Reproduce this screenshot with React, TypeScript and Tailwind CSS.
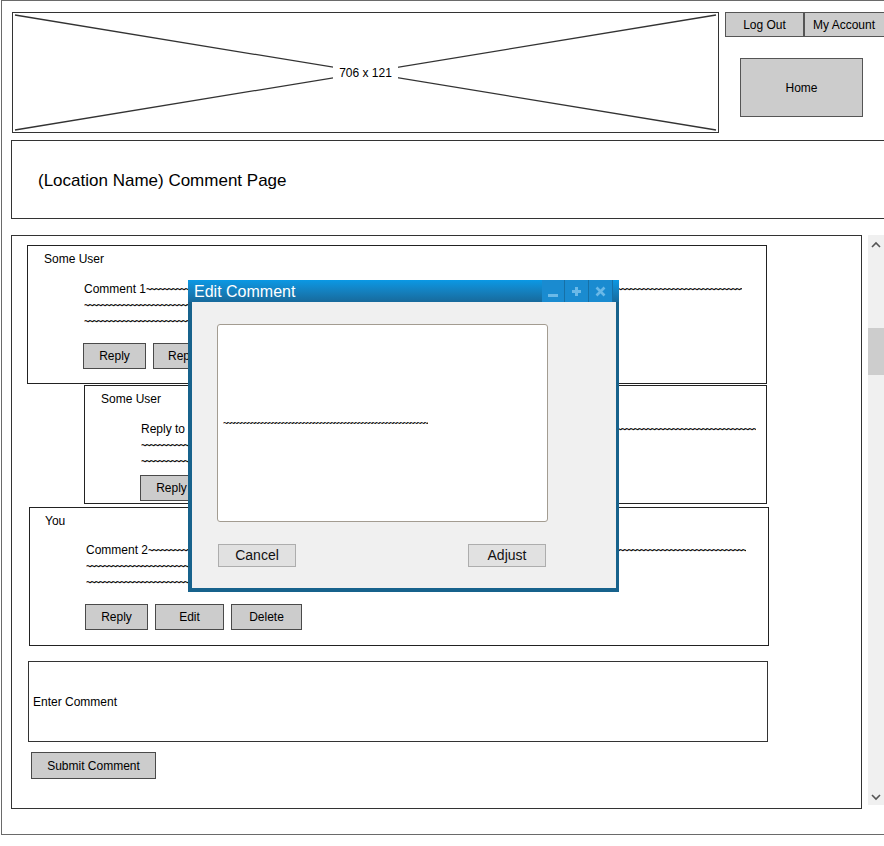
import React from 'react';

const sketchFont = { fontFamily: '"Liberation Sans", Arial, sans-serif' };

const Btn = ({ label, w, h = 'h-[26px]' }: { label: string; w: string; h?: string }) => (
  <div
    className={`${w} ${h} flex items-center justify-center bg-[#cccccc] border-[1.5px] border-[#4a4a4a] text-[12px] text-black`}
  >
    {label}
  </div>
);

const Tildes = ({ w, lead }: { w: string; lead?: string }) => (
  <div className={`${w} h-[16px] leading-[16px] overflow-hidden whitespace-nowrap text-[12px]`}>
    {lead && <span>{lead}</span>}
    <span className="text-[10px] tracking-[-1.6px] text-[#111] font-bold">{'~'.repeat(200)}</span>
  </div>
);

const App = () => {
  return (
    <div className="w-[884px] h-[846px] bg-white overflow-hidden relative" style={sketchFont}>
      {/* outer frame */}
      <div className="ml-[1px] w-[900px] h-[835px] border border-[#6a6a6a]">
        {/* header */}
        <div className="flex pt-[11px] pl-[10px]">
          <div className="w-[707px] h-[121px] border border-[#333] relative flex items-center justify-center">
            <svg className="absolute inset-0" width="705" height="119" viewBox="0 0 705 119">
              <line x1="2" y1="2" x2="703" y2="117" stroke="#333" strokeWidth="1.3" />
              <line x1="2" y1="117" x2="703" y2="2" stroke="#333" strokeWidth="1.3" />
            </svg>
            <span className="relative bg-white px-[6px] text-[12px] leading-[16px]">706 x 121</span>
          </div>
          <div className="ml-[6px] flex flex-col">
            <div className="flex">
              <div className="w-[79px] h-[25px] flex items-center justify-center bg-[#cccccc] border border-[#555] text-[12px]">
                Log Out
              </div>
              <div className="w-[85px] h-[25px] flex items-center pl-[8px] bg-[#cccccc] border border-[#555] text-[12px]">
                My Account
              </div>
            </div>
            <div className="ml-[15px] mt-[21px] w-[123px] h-[59px] flex items-center justify-center bg-[#cccccc] border-[1.5px] border-[#555] text-[12px]">
              Home
            </div>
          </div>
        </div>

        {/* title */}
        <div className="ml-[9px] mt-[7px] w-[900px] h-[79px] border border-[#333] flex items-center pl-[26px] pt-[2px] text-[17px]">
          (Location Name) Comment Page
        </div>

        {/* main */}
        <div className="flex mt-[16px]">
          <div className="ml-[9px] w-[851px] h-[574px] border border-[#333] pt-[9px]">
            {/* comment 1 */}
            <div className="ml-[15px] w-[740px] h-[139px] border border-[#222] pt-[5px]">
              <div className="pl-[16px] text-[12px] leading-[16px]">Some User</div>
              <div className="pl-[56px] mt-[14px]">
                <Tildes w="w-[658px]" lead="Comment 1" />
                <Tildes w="w-[420px]" />
                <Tildes w="w-[420px]" />
                <div className="flex gap-[7px] mt-[14px] -ml-[1px]">
                  <Btn label="Reply" w="w-[63px]" />
                  <Btn label="Report" w="w-[66px]" />
                </div>
              </div>
            </div>

            {/* reply */}
            <div className="ml-[72px] mt-[1px] w-[683px] h-[119px] border border-[#222] pt-[5px]">
              <div className="pl-[16px] text-[12px] leading-[16px]">Some User</div>
              <div className="pl-[56px] mt-[14px]">
                <Tildes w="w-[615px]" lead="Reply to " />
                <Tildes w="w-[420px]" />
                <Tildes w="w-[420px]" />
                <div className="flex mt-[6px] -ml-[1px]">
                  <Btn label="Reply" w="w-[63px]" />
                </div>
              </div>
            </div>

            {/* you */}
            <div className="ml-[17px] mt-[3px] w-[740px] h-[139px] border border-[#222] pt-[5px]">
              <div className="pl-[15px] text-[12px] leading-[16px]">You</div>
              <div className="pl-[56px] mt-[13px]">
                <Tildes w="w-[660px]" lead="Comment 2" />
                <Tildes w="w-[420px]" />
                <Tildes w="w-[420px]" />
                <div className="flex gap-[7px] mt-[14px] -ml-[1px]">
                  <Btn label="Reply" w="w-[63px]" />
                  <Btn label="Edit" w="w-[69px]" />
                  <Btn label="Delete" w="w-[71px]" />
                </div>
              </div>
            </div>

            {/* enter comment */}
            <div className="ml-[16px] mt-[15px] w-[740px] h-[81px] border border-[#333] flex items-center pl-[4px] text-[12px]">
              Enter Comment
            </div>

            <div className="ml-[19px] mt-[10px]">
              <Btn label="Submit Comment" w="w-[125px]" h="h-[27px]" />
            </div>
          </div>

          {/* scrollbar */}
          <div className="ml-[6px] w-[16px] h-[570px] bg-[#f0f0f0] flex flex-col items-center">
            <svg width="12" height="8" viewBox="0 0 12 8" className="mt-[6px]">
              <path d="M2 6 L6 2 L10 6" fill="none" stroke="#555" strokeWidth="1.6" />
            </svg>
            <div className="mt-[79px] w-[16px] h-[47px] bg-[#cdcdcd]" />
            <div className="flex-1" />
            <svg width="12" height="8" viewBox="0 0 12 8" className="mb-[4px]">
              <path d="M2 2 L6 6 L10 2" fill="none" stroke="#555" strokeWidth="1.6" />
            </svg>
          </div>
        </div>
      </div>

      {/* edit dialog */}
      <div className="absolute left-[188px] top-[280px] w-[431px] h-[312px] bg-[#17628c] flex flex-col">
        <div className="h-[22px] bg-linear-to-b from-[#0a98e4] to-[#176a9c] flex items-center">
          <span className="pl-[6px] pt-[2px] text-white text-[16px] leading-[22px]">
            Edit Comment
          </span>
          <div className="flex-1" />
          <div className="flex h-[22px] mr-[6px]">
            <div className="w-[23px] h-[22px] bg-[#1a8bd0] border-r border-[#1670a6] flex items-end justify-center pb-[5px]">
              <div className="w-[10px] h-[3px] bg-[#6ab9e8]" />
            </div>
            <div className="w-[24px] h-[22px] bg-[#1a8bd0] border-r border-[#1670a6] flex items-center justify-center">
              <svg width="11" height="11" viewBox="0 0 11 11">
                <path d="M5.5 1 V10 M1 5.5 H10" stroke="#6ab9e8" strokeWidth="3" />
              </svg>
            </div>
            <div className="w-[24px] h-[22px] bg-[#1a8bd0] border-r border-[#1670a6] flex items-center justify-center">
              <svg width="11" height="11" viewBox="0 0 11 11">
                <path d="M1.5 1.5 L9.5 9.5 M9.5 1.5 L1.5 9.5" stroke="#6ab9e8" strokeWidth="2.6" />
              </svg>
            </div>
          </div>
        </div>
        <div className="flex-1 ml-[4px] mr-[3px] mb-[4px] bg-[#f0f0f0] pt-[22px] pl-[25px]">
          <div className="w-[331px] h-[198px] bg-white border border-[#a39c91] rounded-[3px] flex items-center pl-[5px]">
            <div className="w-[205px] overflow-hidden whitespace-nowrap text-[9px] leading-[8px] tracking-[-1.8px] text-[#111] font-bold">
              {'~'.repeat(120)}
            </div>
          </div>
          <div className="flex mt-[22px] w-[329px] justify-between pl-[1px]">
            <div className="w-[78px] h-[23px] bg-[#e1e1e1] border border-[#adadad] flex items-center justify-center text-[14px] text-[#111]">
              Cancel
            </div>
            <div className="w-[78px] h-[23px] bg-[#e1e1e1] border border-[#adadad] flex items-center justify-center text-[14px] text-[#111]">
              Adjust
            </div>
          </div>
        </div>
      </div>
    </div>
  );
};

export default App;
